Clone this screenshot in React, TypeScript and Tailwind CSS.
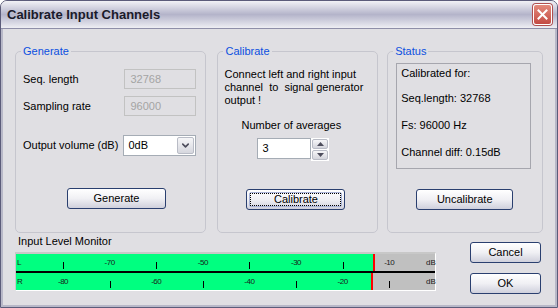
import { ChevronDown } from 'lucide-react'

const font = { fontFamily: '"Liberation Sans", Arial, sans-serif' }

function XPButton({ children, focused, className }: { children: React.ReactNode; focused?: boolean; className?: string }) {
  return (
    <button
      className={`relative h-[21px] rounded-[3px] border border-[#2a3f6f] bg-gradient-to-b from-white via-[#f0f0f4] to-[#cfd0dc] text-[11px] text-black ${className ?? ''}`}
    >
      {focused && <span className="absolute inset-[2px] rounded-[2px] border border-[#aab4d8]" />}
      {focused && <span className="absolute inset-[3px] border border-dotted border-black" />}
      <span className="relative">{children}</span>
    </button>
  )
}

function Group({ title, className, children }: { title: string; className?: string; children: React.ReactNode }) {
  return (
    <fieldset className={`h-[188px] rounded-[5px] border border-[#c6c6ce] ${className ?? ''}`}>
      <legend className="ml-[5px] px-[2px] text-[11px] leading-[13px] text-[#0b4fe0]">{title}</legend>
      {children}
    </fieldset>
  )
}

function DisabledField({ value }: { value: string }) {
  return (
    <div className="flex h-[20px] w-[72px] items-center border border-[#c2c2c2] pl-[5px] text-[11px] text-[#a4a4a4]">
      {value}
    </div>
  )
}

const pos = (db: number) => 47 + (db + 80) * 4.66

function MeterRow({ label, labels, ticks, red }: { label: string; labels: number[]; ticks: number[]; red: number }) {
  return (
    <div className="relative flex h-[17px]">
      <div className="bg-[#00ff80]" style={{ width: red }} />
      <div className="w-[2px] bg-[#ff0000]" />
      <div className="flex-1 bg-[#c0c0c0]" />
      <span className="absolute left-[1px] top-[4px] text-[8px] leading-[9px] text-[#1a1a1a]">{label}</span>
      {labels.map((d) => (
        <span
          key={d}
          className="absolute top-[4px] -translate-x-1/2 text-[8px] leading-[9px] tracking-[-0.5px] text-[#1a1a1a]"
          style={{ left: pos(d) }}
        >
          {d}
        </span>
      ))}
      {ticks.map((d) => (
        <span key={d} className="absolute top-[8px] h-[7px] w-[1px] bg-black" style={{ left: pos(d) }} />
      ))}
      <span className="absolute left-[410px] top-[4px] text-[8px] leading-[9px] text-[#1a1a1a]">dB</span>
    </div>
  )
}

export default function App() {
  return (
    <div style={font} className="h-[308px] w-[558px] bg-white">
      <div className="flex h-full w-full flex-col overflow-hidden rounded-t-[7px] border border-[#5c5c7a] bg-[#e0dfe3]">
        {/* title bar */}
        <div className="flex h-[28px] items-center justify-between border-b border-[#8e8ea8] bg-gradient-to-b from-[#f2f2f6] via-[#b4b4ca] to-[#eeeef3] pl-[6px] pr-[5px]">
          <span className="text-[13px] font-bold text-[#1a1a2a]">Calibrate Input Channels</span>
          <div className="flex h-[21px] w-[19px] items-center justify-center rounded-[3px] border border-white bg-gradient-to-b from-[#e38a7c] to-[#c34a44] shadow-[0_0_0_1px_#b05050]">
            <svg width="11" height="11" viewBox="0 0 11 11">
              <path d="M1.5 1.5 L9.5 9.5 M9.5 1.5 L1.5 9.5" stroke="white" strokeWidth="2" strokeLinecap="square" />
            </svg>
          </div>
        </div>

        <div className="flex flex-1 flex-col border-x-[2px] border-b-[2px] border-[#b8b8c8] px-[12px]">
          {/* groups */}
          <div className="mt-[16px] flex">
            <Group title="Generate" className="w-[193px]">
              <div className="px-[7px]">
                <div className="mt-[11px] flex items-center justify-between pr-[2px]">
                  <span className="text-[11px]">Seq. length</span>
                  <DisabledField value="32768" />
                </div>
                <div className="mt-[7px] flex items-center justify-between pr-[2px]">
                  <span className="text-[11px]">Sampling rate</span>
                  <DisabledField value="96000" />
                </div>
                <div className="mt-[19px] flex items-center justify-between pr-[2px]">
                  <span className="text-[11px]">Output volume (dB)</span>
                  <div className="flex h-[21px] w-[73px] items-center border border-[#a5acb5] bg-white p-[1px]">
                    <span className="flex-1 pl-[3px] text-[11px]">0dB</span>
                    <div className="flex h-full w-[17px] items-center justify-center rounded-[2px] border border-[#b9bcc6] bg-gradient-to-b from-[#f6f6f8] to-[#d6d7de]">
                      <ChevronDown size={11} strokeWidth={3.5} className="text-[#4d4d5c]" />
                    </div>
                  </div>
                </div>
                <XPButton className="ml-[44px] mt-[32px] w-[99px]">Generate</XPButton>
              </div>
            </Group>

            <Group title="Calibrate" className="ml-[11px] w-[162px]">
              <div className="px-[6px]">
                <p className="mt-[10px] text-[11px] leading-[13px]">
                  Connect left and right input
                  <br />
                  channel&nbsp; to&nbsp; signal generator
                  <br />
                  output !
                </p>
                <div className="mt-[12px] pl-[17px] text-[11px] leading-[13px]">Number of averages</div>
                <div className="mt-[6px] flex pl-[33px]">
                  <div className="flex h-[21px] w-[54px] items-center border border-[#a5acb5] bg-white pl-[4px] text-[11px]">3</div>
                  <div className="flex flex-col gap-[1px] border border-white bg-white">
                    <div className="flex h-[10px] w-[16px] items-center justify-center rounded-[2px] border border-[#b9bcc6] bg-gradient-to-b from-[#f6f6f8] to-[#d4d5dc]">
                      <svg width="7" height="4" viewBox="0 0 7 4"><path d="M0 4 L3.5 0 L7 4Z" fill="#4d4d5c" /></svg>
                    </div>
                    <div className="flex h-[10px] w-[16px] items-center justify-center rounded-[2px] border border-[#b9bcc6] bg-gradient-to-b from-[#f6f6f8] to-[#d4d5dc]">
                      <svg width="7" height="4" viewBox="0 0 7 4"><path d="M0 0 L7 0 L3.5 4Z" fill="#4d4d5c" /></svg>
                    </div>
                  </div>
                </div>
                <XPButton focused className="ml-[22px] mt-[28px] w-[99px]">Calibrate</XPButton>
              </div>
            </Group>

            <Group title="Status" className="ml-[9px] w-[157px]">
              <div className="px-[8px]">
                <div className="mt-[5px] flex h-[106px] w-[135px] flex-col border border-[#a6a6ae] pl-[4px] pt-[3px] text-[11px] leading-[13px]">
                  <span>Calibrated for:</span>
                  <span className="mt-[12px]">Seq.length: 32768</span>
                  <span className="mt-[14px]">Fs: 96000 Hz</span>
                  <span className="mt-[14px]">Channel diff: 0.15dB</span>
                </div>
                <XPButton className="ml-[20px] mt-[20px] w-[97px]">Uncalibrate</XPButton>
              </div>
            </Group>
          </div>

          {/* level monitor + dialog buttons */}
          <div className="mt-[2px] flex">
            <div className="flex w-[421px] flex-col">
              <span className="ml-[3px] text-[11px] leading-[13px]">Input Level Monitor</span>
              <div className="mt-[4px] border-b border-r border-t-[2px] border-l border-b-white border-l-[#c8c8c8] border-r-white border-t-[#c8c8c8]">
                <MeterRow label="L" labels={[-70, -50, -30, -10]} ticks={[-80, -60, -40, -20]} red={357} />
                <div className="h-[2px] bg-black" />
                <MeterRow label="R" labels={[-80, -60, -40, -20]} ticks={[-70, -50, -30, -10]} red={355} />
              </div>
            </div>
            <div className="ml-[34px] mt-[7px] flex flex-col gap-[10px]">
              <XPButton className="w-[71px]">Cancel</XPButton>
              <XPButton className="w-[71px]">OK</XPButton>
            </div>
          </div>
        </div>
      </div>
    </div>
  )
}
